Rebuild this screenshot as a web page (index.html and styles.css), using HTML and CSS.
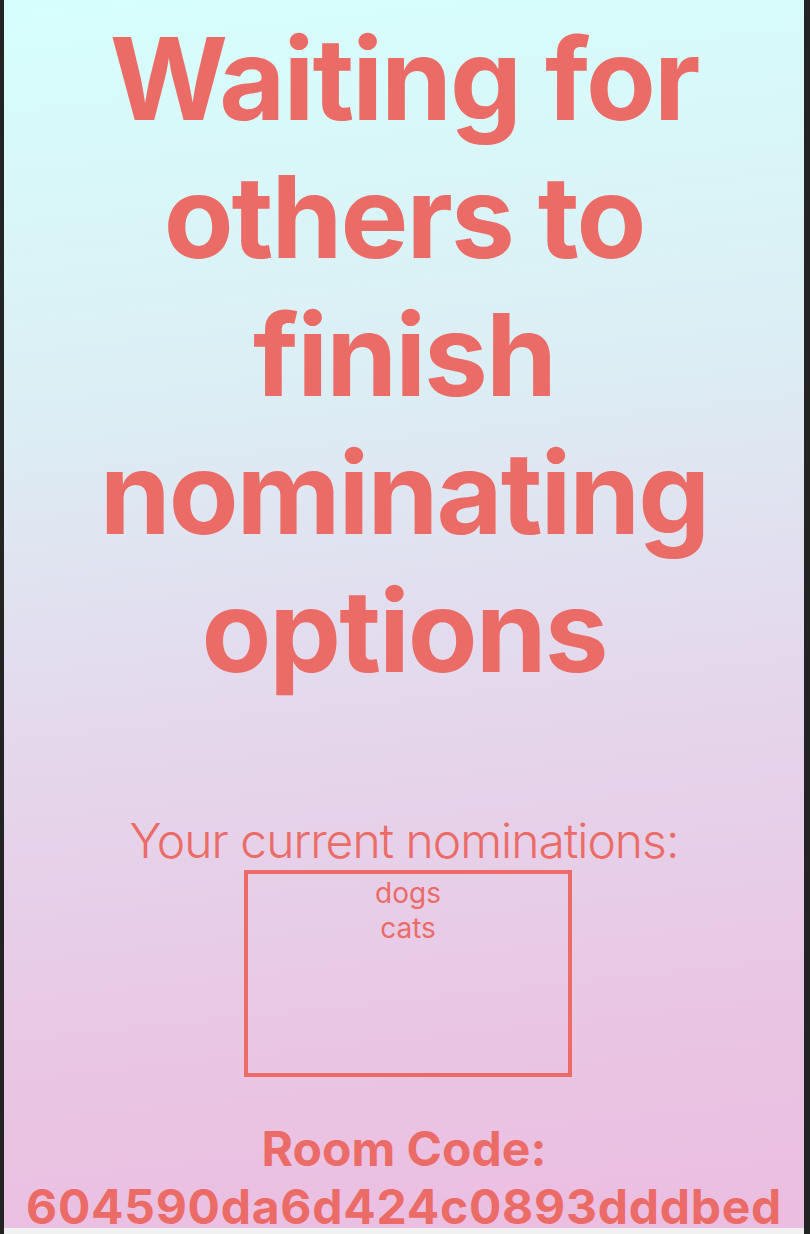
FILE: index.html
```html
<!DOCTYPE html>
<html lang="en">
<head>
<meta charset="utf-8">
<title>Waiting</title>
<link rel="stylesheet" href="styles.css">
</head>
<body>
<div class="frame">
  <main class="page">
    <h1 class="title">Waiting for others to finish nominating options</h1>
    <p class="label">Your current nominations:</p>
    <div class="box">
      <div class="item">dogs</div>
      <div class="item">cats</div>
    </div>
    <p class="room">Room Code: <span class="code">604590da6d424c0893dddbed</span></p>
  </main>
</div>
<div class="hbar"></div>
</body>
</html>
```

FILE: styles.css
```css
html, body {
  margin: 0;
  padding: 0;
}
body {
  background: #232323;
  width: 810px;
  height: 1234px;
  overflow: hidden;
  font-family: "Inter", "Noto Sans", sans-serif;
}
.frame {
  margin-left: 4px;
  width: 800px;
  height: 1228px;
  overflow: hidden;
  background: linear-gradient(174deg, #d6fffc 0%, #dcedf4 33%, #e4d9ed 55%, #eac4e3 85%, #ebbde1 100%);
}
.hbar {
  margin-left: 4px;
  width: 800px;
  height: 6px;
  background: #f1f1f1;
}
.page {
  display: flex;
  flex-direction: column;
  align-items: center;
  text-align: center;
  color: #eb6b66;
}
.title {
  margin: 0;
  padding-top: 10px;
  font-size: 114px;
  line-height: 138px;
  font-weight: 700;
  letter-spacing: -2px;
}
.label {
  margin: 112px 0 0;
  font-size: 48px;
  line-height: 58px;
  font-weight: 300;
  letter-spacing: -1px;
}
.box {
  box-sizing: border-box;
  width: 328px;
  height: 207px;
  margin-left: 8px;
  border: 4px solid #eb6b66;
  padding-top: 2px;
}
.item {
  font-size: 28px;
  line-height: 35px;
  font-weight: 400;
}
.room {
  margin: 43px 0 0;
  font-size: 48px;
  line-height: 58px;
  font-weight: 700;
}
.code {
  letter-spacing: 0.75px;
}
```
